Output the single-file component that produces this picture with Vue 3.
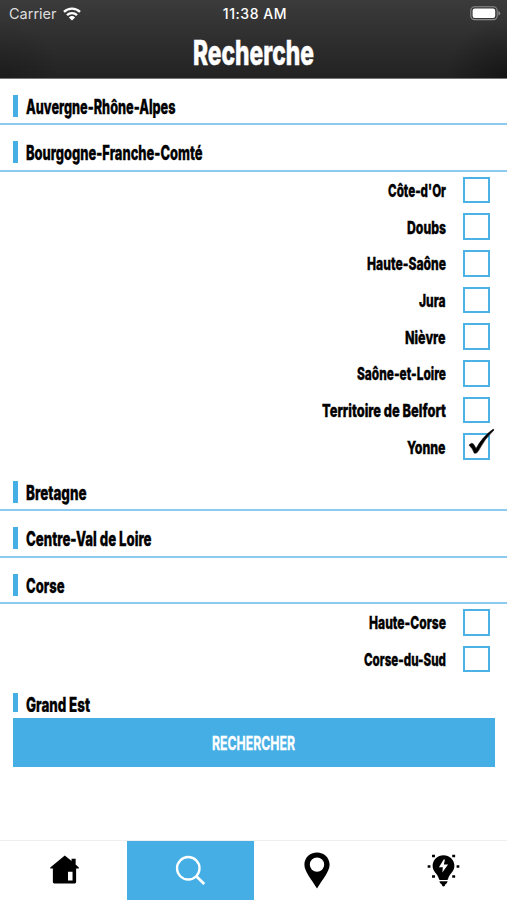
<script setup>
import { ref } from 'vue'

const regions = ref([
  { name: 'Auvergne-Rhône-Alpes', w: 149.5, items: [] },
  {
    name: 'Bourgogne-Franche-Comté', w: 176.5,
    items: [
      { name: "Côte-d'Or", w: 58, on: false },
      { name: 'Doubs', w: 39, on: false },
      { name: 'Haute-Saône', w: 79, on: false },
      { name: 'Jura', w: 26.5, on: false },
      { name: 'Nièvre', w: 40.5, on: false },
      { name: 'Saône-et-Loire', w: 89, on: false },
      { name: 'Territoire de Belfort', w: 124, on: false },
      { name: 'Yonne', w: 38.5, on: true }
    ]
  },
  { name: 'Bretagne', w: 60.5, items: [] },
  { name: 'Centre-Val de Loire', w: 125.5, items: [] },
  {
    name: 'Corse', w: 38.5,
    items: [
      { name: 'Haute-Corse', w: 77, on: false },
      { name: 'Corse-du-Sud', w: 82, on: false }
    ]
  },
  { name: 'Grand Est', w: 64, items: [] }
])
</script>

<template>
  <div class="screen">
    <header class="header">
      <div class="status">
        <div class="carrier">
          <span>Carrier</span>
          <svg class="wifi" width="18" height="14" viewBox="0 0 18 14">
            <path d="M1 4.900a11.400 11.400 0 0 1 16 0M4 8.100a7.200 7.200 0 0 1 10 0" fill="none" stroke="#fff" stroke-width="2.400" />
            <path d="M9 13.600 5.900 10.400a4.400 4.400 0 0 1 6.200 0z" fill="#fff" />
          </svg>
        </div>
        <span class="time">11:38 AM</span>
        <svg class="battery" width="31" height="15" viewBox="0 0 31 15">
          <rect x="0.8" y="0.8" width="26.4" height="12.8" rx="3.8" fill="none" stroke="#8c8c8c" stroke-width="1.1" />
          <rect x="2.6" y="2.5" width="22.6" height="9.4" rx="2.2" fill="#fff" />
          <path d="M28.4 5v4.6q1.8-.7 1.8-2.3T28.4 5z" fill="#8c8c8c" />
        </svg>
      </div>
      <svg class="title" width="121" height="40">
        <text x="0" y="38.300" textLength="121" lengthAdjust="spacingAndGlyphs">Recherche</text>
      </svg>
    </header>

    <main class="list">
      <section v-for="r in regions" :key="r.name">
        <div class="region">
          <i class="bar"></i>
          <svg class="region-name" :width="r.w" height="38">
            <text x="0" y="35" :textLength="r.w" lengthAdjust="spacingAndGlyphs">{{ r.name }}</text>
          </svg>
        </div>
        <div v-for="d in r.items" :key="d.name" class="dept" @click="d.on = !d.on">
          <svg class="dept-name" :width="d.w" height="36">
            <text x="0" y="25.300" :textLength="d.w" lengthAdjust="spacingAndGlyphs">{{ d.name }}</text>
          </svg>
          <span class="box">
            <svg v-if="d.on" class="check" width="27" height="27" viewBox="0 0 27 27">
              <path d="M1 16.100Q3.800 13 5.600 15.200L8.100 19.400Q14.500 7.600 25.300.100L26 1Q16.600 9.800 10 22.600Q8.600 24.800 6.300 24.200Q4.400 19.200 1 16.100z" stroke="#000" stroke-width="0.500" />
            </svg>
          </span>
        </div>
      </section>
    </main>

    <button class="submit" type="button">
      <svg class="submit-label" width="83" height="20">
        <text x="0" y="16.700" textLength="83" lengthAdjust="spacingAndGlyphs">RECHERCHER</text>
      </svg>
    </button>

    <nav class="tabs">
      <div class="tab home">
        <svg width="31" height="31" viewBox="0 0 32 32">
          <path fill-rule="evenodd" d="M1.300 14 16.300 1.500l7 5.800V5h4.200v5.800l3.300 3.200v1H28V29q0 1.400-1.400 1.400H5.400Q4 30.400 4 29V15H1.300zM19.600 18.200v9.100h4.700v-9.100z" />
        </svg>
      </div>
      <div class="tab active">
        <svg width="31" height="31" viewBox="0 0 32 32">
          <circle cx="13.700" cy="13.700" r="11.600" fill="none" stroke="#fff" stroke-width="2.400" />
          <path d="m22 22 8.200 8" fill="none" stroke="#fff" stroke-width="2.800" />
        </svg>
      </div>
      <div class="tab">
        <svg width="26" height="37" viewBox="0 0 26 37">
          <path fill-rule="evenodd" d="M13 .4C5.800.4.400 5.900.400 12.500.400 19.500 7 26.500 13 36.600 19 26.500 25.600 19.500 25.600 12.500 25.600 5.900 20.200.400 13 .4zM13 5.400a7.200 7.200 0 1 1 0 14.400 7.200 7.200 0 0 1 0-14.400z" />
        </svg>
      </div>
      <div class="tab">
        <svg width="33" height="33" viewBox="0 0 34 34">
          <path d="M17 1.200A11.200 11.200 0 0 0 5.800 12.400c0 6.200 5.300 7.700 6.400 13.200q.2 1.200 1.400 1.200h6.800q1.200 0 1.400-1.200c1.100-5.500 6.400-7 6.400-13.200A11.200 11.200 0 0 0 17 1.200z" />
          <path d="M12.800 28.200h8.400q0 2-2.400 3.200Q18.500 33.500 17 33.500t-1.800-2.100q-2.400-1.200-2.400-3.200z" />
          <path d="m17.200 5.600-4.900 8h4L15.800 19l5.900-8.100h-4.300l1.100-5.300z" fill="#fff" />
          <path d="M5.200.800h3v2.500h-3zM26 .800h3v2.500h-3zM.700 11.600h2.800v2.600H.700zM30.500 11.600h2.800v2.600h-2.800zM5.200 22h3v2.500h-3zM26 22h3v2.500h-3z" />
        </svg>
      </div>
    </nav>
  </div>
</template>

<style>
body {
  margin: 0;
  background: #fff;
}
</style>

<style scoped>
.screen {
  box-sizing: border-box;
  width: 507px;
  height: 900px;
  display: flex;
  flex-direction: column;
  overflow: hidden;
  background: #fff;
  color: #000;
  font-family: Inter, "Liberation Sans", sans-serif;
}
svg {
  display: block;
  flex: none;
  overflow: visible;
}
.header {
  box-sizing: border-box;
  flex: none;
  height: 79px;
  display: flex;
  flex-direction: column;
  align-items: center;
  border-bottom: 1px solid #777;
  background:
    radial-gradient(circle at 0 100%, rgba(0, 0, 0, 0.2), transparent 60px),
    radial-gradient(circle at 100% 100%, rgba(0, 0, 0, 0.4), transparent 60px),
    linear-gradient(#3b3b3b, #222);
}
.status {
  box-sizing: border-box;
  width: 100%;
  height: 27px;
  padding: 0 6px 0 9px;
  display: grid;
  grid-template-columns: 1fr auto 1fr;
  align-items: center;
  color: #fff;
  font-size: 14px;
}
.carrier {
  display: flex;
  align-items: center;
  gap: 6px;
  color: #ddd;
  font-size: 14.500px;
}
.time {
  font-weight: 500;
  letter-spacing: 0.550px;
}
.battery {
  justify-self: end;
}
.title text {
  font-size: 34px;
  font-weight: 800;
  fill: #fff;
  stroke: #fff;
  stroke-width: 0.500px;
}
.list {
  flex: none;
  height: 633px;
  overflow: hidden;
}
.region {
  box-sizing: border-box;
  height: 46.400px;
  display: flex;
  align-items: flex-start;
  gap: 7.500px;
  padding-left: 13px;
  border-bottom: 2px solid #8ccbef;
}
.bar {
  width: 5px;
  height: 22px;
  margin-top: 16px;
  background: #45afe5;
}
.region-name text,
.dept-name text {
  font-weight: 800;
  stroke: #000;
  stroke-width: 0.350px;
}
.region-name text {
  font-size: 20px;
}
.dept {
  height: 36.650px;
  display: flex;
  justify-content: flex-end;
  align-items: center;
  gap: 17.300px;
  padding-right: 17.300px;
}
.dept-name text {
  font-size: 18px;
}
.box {
  position: relative;
  box-sizing: border-box;
  width: 26.700px;
  height: 26.700px;
  border: 2px solid #4cb1e5;
}
.check {
  position: absolute;
  left: 3px;
  top: -6.500px;
}
.submit {
  flex: none;
  height: 49px;
  margin: 6px 12.500px 0 13px;
  padding: 0;
  display: flex;
  align-items: center;
  justify-content: center;
  border: 0;
  background: #45afe5;
  font-family: inherit;
}
.submit-label text {
  font-size: 18.800px;
  font-weight: 700;
  fill: #fff;
  stroke: #fff;
  stroke-width: 0.300px;
}
.tabs {
  flex: none;
  height: 60px;
  box-sizing: border-box;
  margin-top: auto;
  display: grid;
  grid-template-columns: repeat(4, 1fr);
  border-top: 1px solid #efefef;
}
.tab {
  display: flex;
  align-items: center;
  justify-content: center;
}
.home {
  padding: 0 0 2px 2px;
}
.active {
  background: #45afe5;
}
</style>
